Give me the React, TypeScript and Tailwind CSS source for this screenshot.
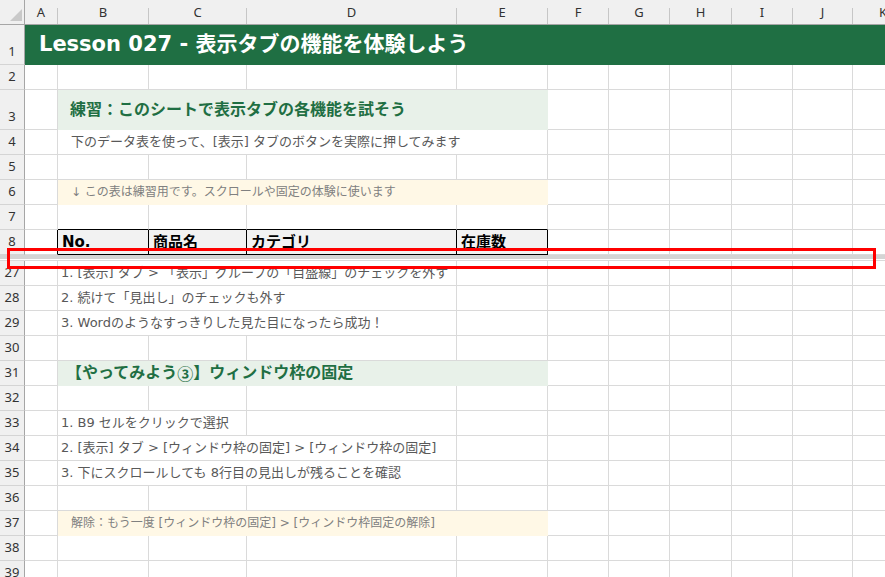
import React from "react";

const GRID =
  "grid grid-cols-[25px_33px_91px_98px_210px_91px_61px_61px_62px_61px_60px_61px]";
const LETTERS = ["A", "B", "C", "D", "E", "F", "G", "H", "I", "J", "K"];
const SPAN: Record<number, string> = {
  1: "col-span-1",
  2: "col-span-2",
  3: "col-span-3",
  4: "col-span-4",
  11: "col-span-11",
};

type Cell = { span?: number; cls?: string; text?: React.ReactNode };

const LINE = "border-r border-b border-[#DADADA]";
const GREEN = "bg-[#E8F1E9] border-r border-b border-transparent";
const YELLOW = "bg-[#FFF8E6] border-r border-b border-transparent";
const HEAD_FONT = "font-['Noto_Sans','Noto_Sans_CJK_JP',sans-serif]";

function fill(cells: Cell[]): Cell[] {
  const used = cells.reduce((s, c) => s + (c.span ?? 1), 0);
  const rest: Cell[] = [];
  for (let i = used; i < 11; i++) rest.push({});
  return [...cells, ...rest];
}

function Row({ n, tall, cells = [] }: { n: number; tall?: boolean; cells?: Cell[] }) {
  return (
    <div className={`${GRID} ${tall ? "h-[40px]" : "h-[25px]"}`}>
      <div
        className={`${HEAD_FONT} flex items-end justify-center pb-[3px] bg-[#F0F0F0] border-r border-b border-r-[#A6A6A6] border-b-[#D4D4D4] text-[13px] text-[#333]`}
      >
        {n}
      </div>
      {fill(cells).map((c, i) => (
        <div
          key={i}
          className={`${SPAN[c.span ?? 1]} flex items-center whitespace-nowrap overflow-hidden ${c.cls ?? LINE}`}
        >
          {c.text}
        </div>
      ))}
    </div>
  );
}

const Step = ({ children, span = 3 }: { children: React.ReactNode; span?: number }) => ({
  span,
  cls: `${LINE} pl-[3px] text-[13px] text-[#595959]`,
  text: children,
});

const A: Cell = {};

export default function App() {
  return (
    <div className="relative w-[885px] h-[577px] overflow-hidden bg-white font-['DejaVu_Sans','Noto_Sans_CJK_JP',sans-serif]">
      {/* column headers */}
      <div className={`${GRID} ${HEAD_FONT} h-[25px] bg-[#F0F0F0] border-b border-[#A6A6A6]`}>
        <div className="border-r border-[#A6A6A6]">
          <svg width="25" height="24" viewBox="0 0 25 24">
            <polygon points="22,9 22,21 10,21" fill="#C9C9C9" />
          </svg>
        </div>
        {LETTERS.map((l) => (
          <div key={l} className="flex">
            <div className="flex-1 flex items-end justify-center pb-[2px] text-[13px] text-[#333]">{l}</div>
            <div className="w-px mt-[8px] bg-[#C6C6C6]" />
          </div>
        ))}
      </div>

      <Row
        n={1}
        tall
        cells={[
          {
            span: 11,
            cls: "bg-[#1F6F43] pl-[14px] text-[21px] font-bold text-white",
            text: "Lesson 027 - 表示タブの機能を体験しよう",
          },
        ]}
      />
      <Row n={2} />
      <Row
        n={3}
        tall
        cells={[
          A,
          {
            span: 4,
            cls: `${GREEN} pl-[12px] text-[16px] font-bold text-[#1F6F43]`,
            text: "練習：このシートで表示タブの各機能を試そう",
          },
        ]}
      />
      <Row
        n={4}
        cells={[
          A,
          {
            span: 4,
            cls: `${LINE} pl-[13px] text-[13px] text-[#595959]`,
            text: "下のデータ表を使って、[表示] タブのボタンを実際に押してみます",
          },
        ]}
      />
      <Row n={5} />
      <Row
        n={6}
        cells={[
          A,
          {
            span: 4,
            cls: `${YELLOW} pl-[13px] text-[12px] text-[#808080]`,
            text: "↓ この表は練習用です。スクロールや固定の体験に使います",
          },
        ]}
      />
      <Row
        n={7}
        cells={[
          A,
          { cls: "border-r border-b border-[#DADADA] border-b-black" },
          { cls: "border-r border-b border-[#DADADA] border-b-black" },
          { cls: "border-r border-b border-[#DADADA] border-b-black" },
          { cls: "border-r border-b border-[#DADADA] border-b-black" },
        ]}
      />
      <Row
        n={8}
        cells={[
          { cls: "border-r border-b border-[#DADADA] border-r-black" },
          ...["No.", "商品名", "カテゴリ", "在庫数"].map((t) => ({
            cls: "bg-[#F2F2F2] border-r border-b border-black pl-[4px] text-[15px] font-bold text-black",
            text: t,
          })),
        ]}
      />

      {/* frozen pane split */}
      <div className="h-[4px] bg-[#D4D4D4]" />
      <div className="h-px bg-white" />
      <div className="h-px bg-[#DADADA]" />

      <Row n={27} cells={[A, Step({ children: "1. [表示] タブ > 「表示」グループの「目盛線」のチェックを外す" })]} />
      <Row n={28} cells={[A, Step({ children: "2. 続けて「見出し」のチェックも外す" })]} />
      <Row n={29} cells={[A, Step({ children: "3. Wordのようなすっきりした見た目になったら成功！" })]} />
      <Row n={30} />
      <Row
        n={31}
        cells={[
          A,
          {
            span: 4,
            cls: `${GREEN} pl-[8px] text-[16px] font-bold text-[#1F6F43]`,
            text: (
              <>
                【やってみよう<span className="font-['Noto_Sans_CJK_JP',sans-serif]">③</span>】ウィンドウ枠の固定
              </>
            ),
          },
        ]}
      />
      <Row n={32} />
      <Row n={33} cells={[A, Step({ children: "1. B9 セルをクリックで選択", span: 2 })]} />
      <Row n={34} cells={[A, Step({ children: "2. [表示] タブ > [ウィンドウ枠の固定] > [ウィンドウ枠の固定]" })]} />
      <Row n={35} cells={[A, Step({ children: "3. 下にスクロールしても 8行目の見出しが残ることを確認" })]} />
      <Row n={36} />
      <Row
        n={37}
        cells={[
          A,
          {
            span: 4,
            cls: `${YELLOW} pl-[13px] text-[12px] text-[#808080]`,
            text: "解除：もう一度 [ウィンドウ枠の固定] > [ウィンドウ枠固定の解除]",
          },
        ]}
      />
      <Row n={38} />
      <Row n={39} />

      {/* highlight box over the split */}
      <div className="absolute left-[7px] top-[248px] w-[869px] h-[21px] border-[3px] border-[#FF0000]" />
    </div>
  );
}
